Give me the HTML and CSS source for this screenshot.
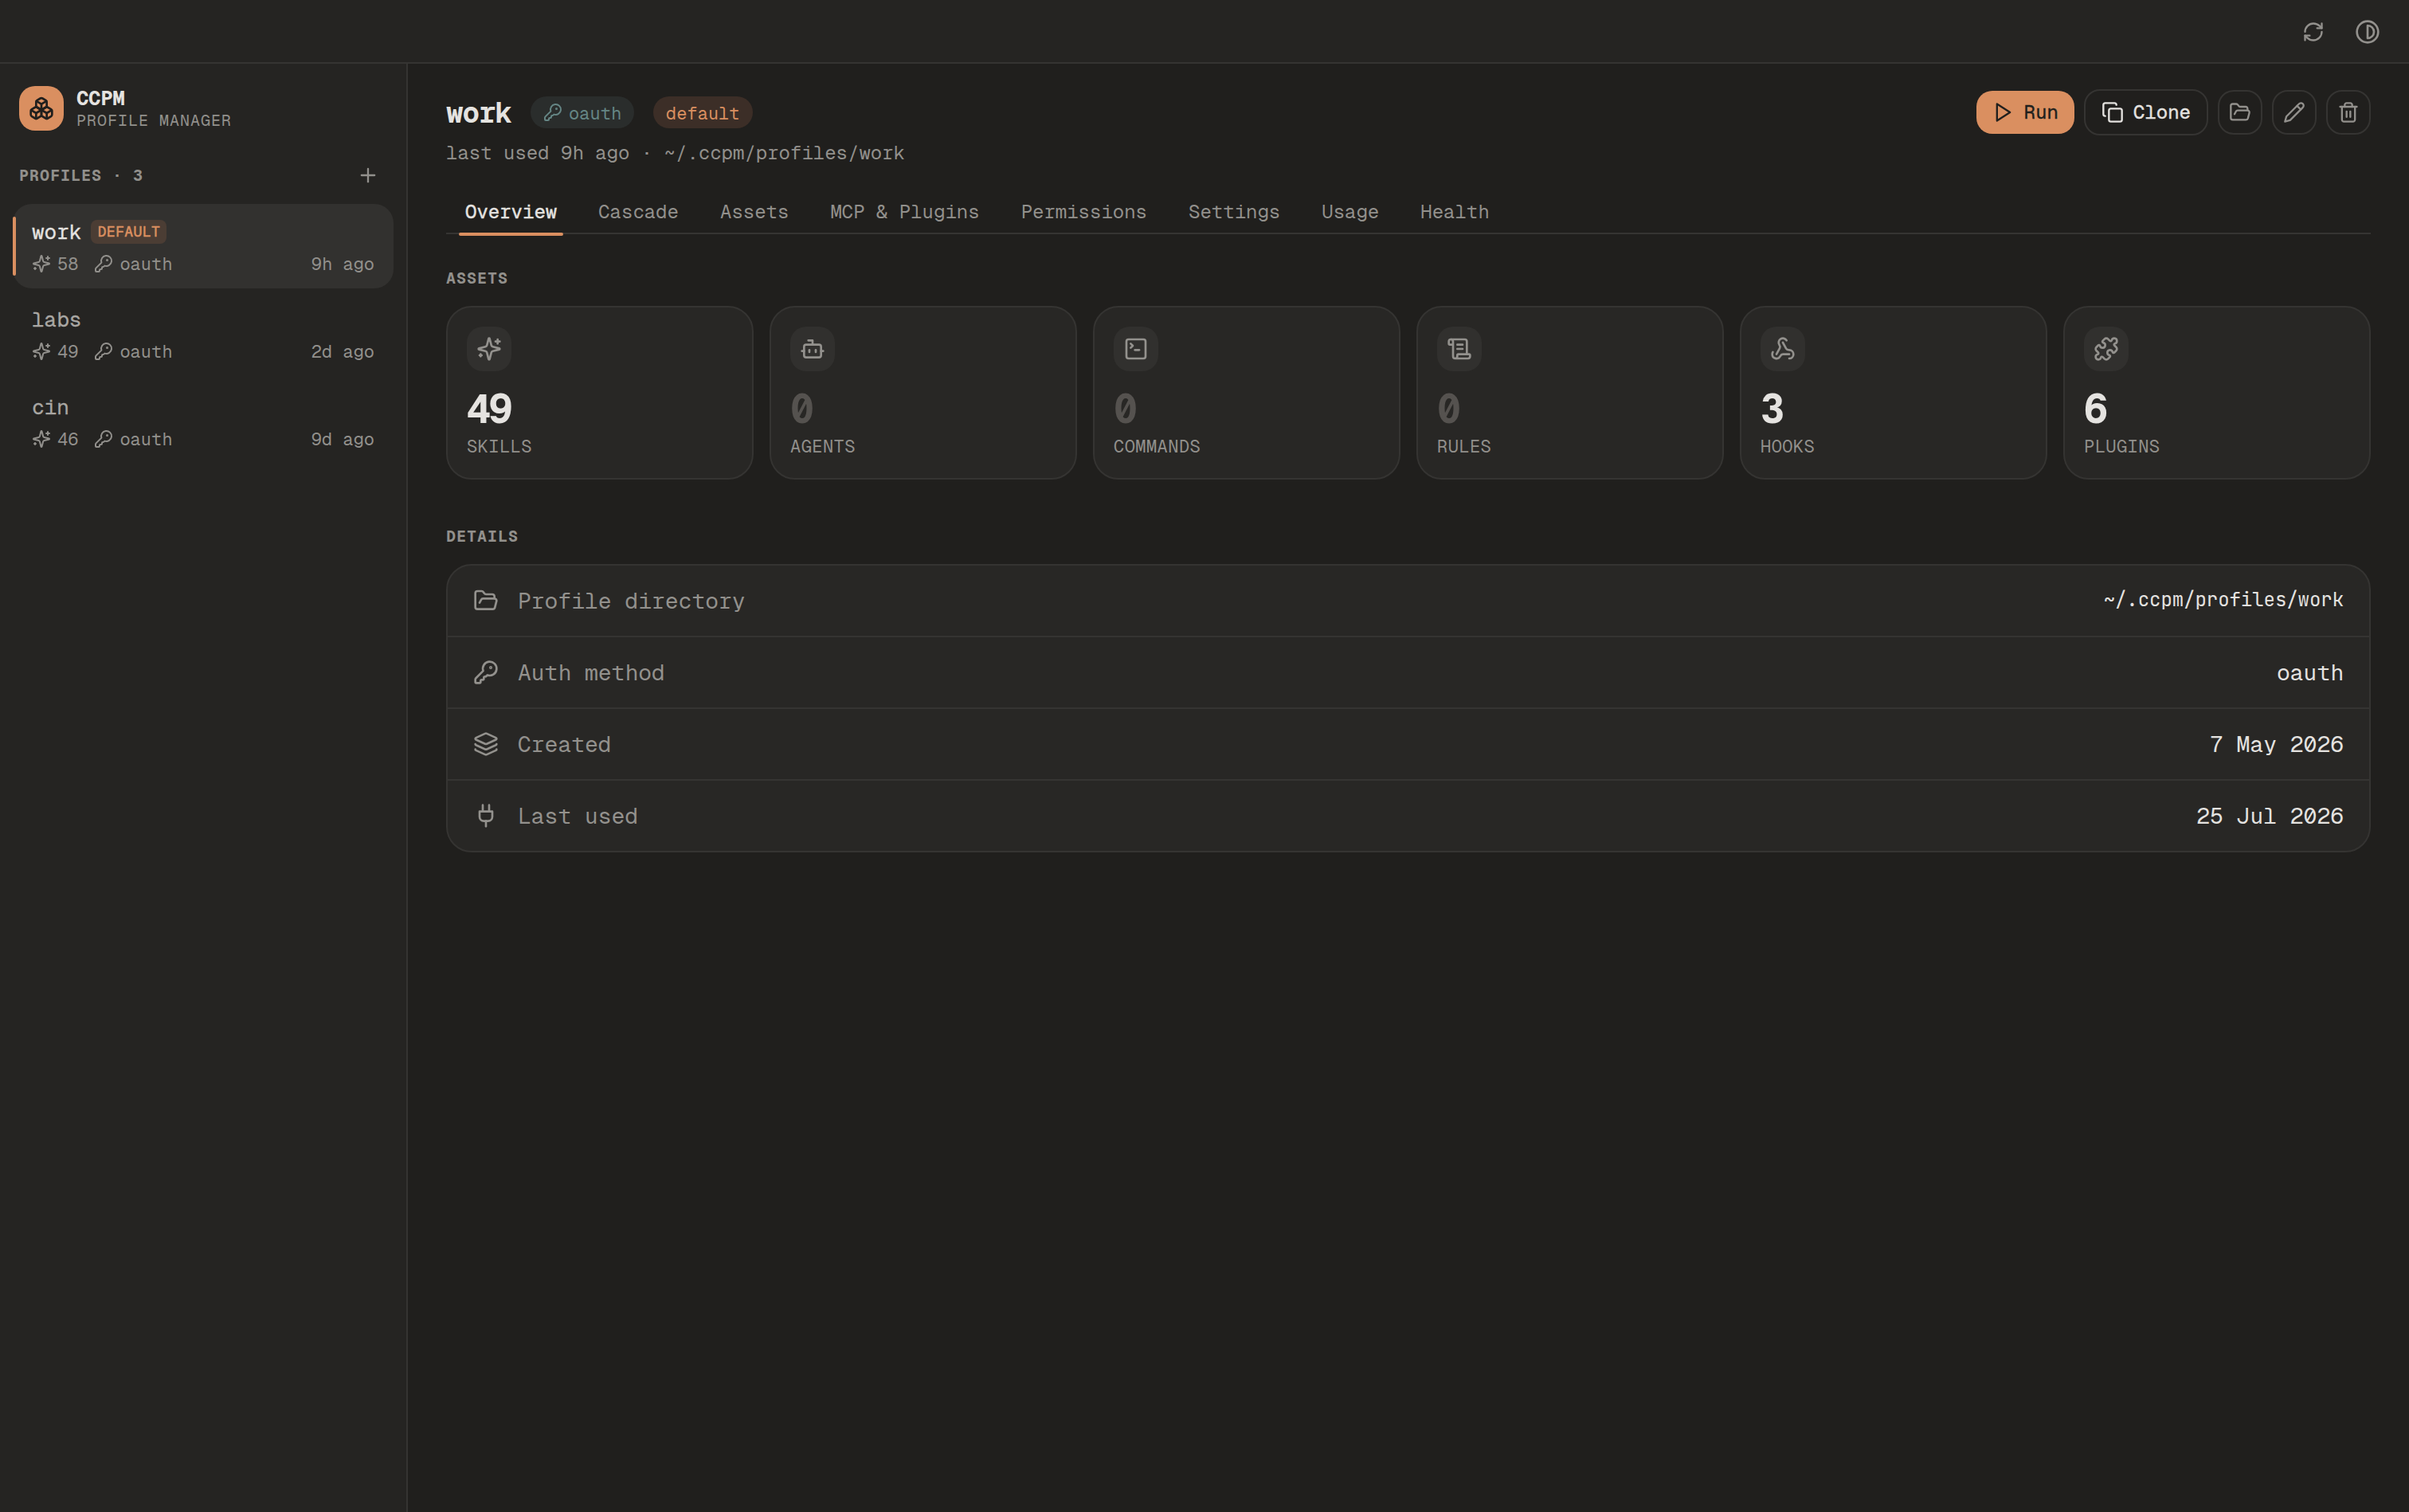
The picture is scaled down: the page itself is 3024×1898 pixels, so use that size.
FILE: index.html
```html
<!DOCTYPE html>
<html lang="en">
<head>
    <meta charset="UTF-8">
    <meta name="viewport" content="width=device-width, initial-scale=1.0">
    <title>CCPM Profile Manager</title>
    <link rel="stylesheet" href="styles.css">
</head>
<body>
    <!-- shared icons -->
    <svg class="sprite" width="0" height="0">
        <symbol id="i-sparkles" viewBox="0 0 24 24">
            <path d="M9.937 15.5A2 2 0 0 0 8.5 14.063l-6.135-1.582a.5.5 0 0 1 0-.962L8.5 9.936A2 2 0 0 0 9.937 8.5l1.582-6.135a.5.5 0 0 1 .963 0L14.063 8.5A2 2 0 0 0 15.5 9.937l6.135 1.581a.5.5 0 0 1 0 .964L15.5 14.063a2 2 0 0 0-1.437 1.437l-1.582 6.135a.5.5 0 0 1-.963 0z"/>
            <path d="M20 3v4"/><path d="M22 5h-4"/><path d="M4 17v2"/><path d="M5 18H3"/>
        </symbol>
        <symbol id="i-key" viewBox="0 0 24 24">
            <path d="M2.586 17.414A2 2 0 0 0 2 18.828V21a1 1 0 0 0 1 1h3a1 1 0 0 0 1-1v-1a1 1 0 0 1 1-1h1a1 1 0 0 0 1-1v-1a1 1 0 0 1 1-1h.172a2 2 0 0 0 1.414-.586l.814-.814a6.5 6.5 0 1 0-4-4z"/>
            <circle cx="16.5" cy="7.5" r=".5" fill="currentColor"/>
        </symbol>
        <symbol id="i-folder" viewBox="0 0 24 24">
            <path d="m6 14 1.5-2.9A2 2 0 0 1 9.24 10H20a2 2 0 0 1 1.94 2.5l-1.54 6a2 2 0 0 1-1.95 1.5H4a2 2 0 0 1-2-2V5a2 2 0 0 1 2-2h3.9a2 2 0 0 1 1.69.9l.81 1.2a2 2 0 0 0 1.67.9H18a2 2 0 0 1 2 2v2"/>
        </symbol>
        <symbol id="i-boxes" viewBox="0 0 24 24">
            <path d="M2.97 12.92A2 2 0 0 0 2 14.63v3.24a2 2 0 0 0 .97 1.71l3 1.8a2 2 0 0 0 2.06 0L12 19v-5.5l-5-3-4.03 2.42Z"/>
            <path d="m7 16.5-4.74-2.85"/><path d="m7 16.5 5-3"/><path d="M7 16.5v5.17"/>
            <path d="M12 13.5V19l3.97 2.38a2 2 0 0 0 2.06 0l3-1.8a2 2 0 0 0 .97-1.71v-3.24a2 2 0 0 0-.97-1.71L17 10.5l-5 3Z"/>
            <path d="m17 16.5-5-3"/><path d="m17 16.5 4.74-2.85"/><path d="M17 16.5v5.17"/>
            <path d="M7.97 4.42A2 2 0 0 0 7 6.13v4.37l5 3 5-3V6.13a2 2 0 0 0-.97-1.71l-3-1.8a2 2 0 0 0-2.06 0l-3 1.8Z"/>
            <path d="M12 8 7.26 5.15"/><path d="m12 8 4.74-2.85"/><path d="M12 13.5V8"/>
        </symbol>
    </svg>

    <header class="topbar">
        <svg class="icon icon-md" viewBox="0 0 24 24"><path d="M3 12a9 9 0 0 1 9-9 9.75 9.75 0 0 1 6.74 2.74L21 8"/><path d="M21 3v5h-5"/><path d="M21 12a9 9 0 0 1-9 9 9.75 9.75 0 0 1-6.74-2.74L3 16"/><path d="M8 16H3v5"/></svg>
        <svg class="icon icon-lg" viewBox="0 0 24 24"><circle cx="12" cy="12" r="10"/><path d="M12 18a6 6 0 0 0 0-12v12z"/></svg>
    </header>

    <div class="layout">
        <aside class="sidebar">
            <div class="brand">
                <div class="logo"><svg class="icon icon-lg"><use href="#i-boxes"/></svg></div>
                <div class="brand-text">
                    <div class="brand-name">CCPM</div>
                    <div class="brand-sub">PROFILE MANAGER</div>
                </div>
            </div>
            <div class="list-head">
                <span>PROFILES · 3</span>
                <svg class="icon icon-md" viewBox="0 0 24 24"><path d="M5 12h14"/><path d="M12 5v14"/></svg>
            </div>
            <nav class="profiles">
                <div class="profile active">
                    <div class="profile-top"><span class="profile-name">work</span><span class="tag">DEFAULT</span></div>
                    <div class="profile-meta">
                        <svg class="icon icon-sm"><use href="#i-sparkles"/></svg><span class="count">58</span>
                        <svg class="icon icon-sm"><use href="#i-key"/></svg><span>oauth</span>
                        <span class="ago">9h ago</span>
                    </div>
                </div>
                <div class="profile">
                    <div class="profile-top"><span class="profile-name">labs</span></div>
                    <div class="profile-meta">
                        <svg class="icon icon-sm"><use href="#i-sparkles"/></svg><span class="count">49</span>
                        <svg class="icon icon-sm"><use href="#i-key"/></svg><span>oauth</span>
                        <span class="ago">2d ago</span>
                    </div>
                </div>
                <div class="profile">
                    <div class="profile-top"><span class="profile-name">cin</span></div>
                    <div class="profile-meta">
                        <svg class="icon icon-sm"><use href="#i-sparkles"/></svg><span class="count">46</span>
                        <svg class="icon icon-sm"><use href="#i-key"/></svg><span>oauth</span>
                        <span class="ago">9d ago</span>
                    </div>
                </div>
            </nav>
        </aside>

        <main class="main">
            <div class="header">
                <h1>work</h1>
                <span class="pill pill-auth"><svg class="icon icon-sm"><use href="#i-key"/></svg><span>oauth</span></span>
                <span class="pill pill-default"><span>default</span></span>
                <div class="actions">
                    <button class="btn btn-run"><svg class="icon icon-md" viewBox="0 0 24 24"><path d="m5 3 14 9-14 9V3z"/></svg><span>Run</span></button>
                    <button class="btn btn-clone"><svg class="icon icon-md" viewBox="0 0 24 24"><rect width="14" height="14" x="8" y="8" rx="2"/><path d="M4 16c-1.1 0-2-.9-2-2V4c0-1.1.9-2 2-2h10c1.1 0 2 .9 2 2"/></svg><span>Clone</span></button>
                    <button class="btn btn-icon"><svg class="icon icon-md"><use href="#i-folder"/></svg></button>
                    <button class="btn btn-icon"><svg class="icon icon-md" viewBox="0 0 24 24"><path d="M17 3a2.85 2.83 0 1 1 4 4L7.5 20.5 2 22l1.5-5.5Z"/><path d="m15 5 4 4"/></svg></button>
                    <button class="btn btn-icon"><svg class="icon icon-md" viewBox="0 0 24 24"><path d="M3 6h18"/><path d="M19 6v14c0 1-1 2-2 2H7c-1 0-2-1-2-2V6"/><path d="M8 6V4c0-1 1-2 2-2h4c1 0 2 1 2 2v2"/><path d="M10 11v6"/><path d="M14 11v6"/></svg></button>
                </div>
            </div>
            <p class="subtitle">last used 9h ago · ~/.ccpm/profiles/work</p>

            <div class="tabs">
                <a class="tab active">Overview</a>
                <a class="tab">Cascade</a>
                <a class="tab">Assets</a>
                <a class="tab">MCP &amp; Plugins</a>
                <a class="tab">Permissions</a>
                <a class="tab">Settings</a>
                <a class="tab">Usage</a>
                <a class="tab">Health</a>
            </div>

            <h2>ASSETS</h2>
            <div class="cards">
                <div class="card">
                    <div class="tile"><svg class="icon icon-lg"><use href="#i-sparkles"/></svg></div>
                    <div class="number">49</div>
                    <div class="label">SKILLS</div>
                </div>
                <div class="card">
                    <div class="tile"><svg class="icon icon-lg" viewBox="0 0 24 24"><path d="M12 8V4H8"/><rect width="16" height="12" x="4" y="8" rx="2"/><path d="M2 14h2"/><path d="M20 14h2"/><path d="M15 13v2"/><path d="M9 13v2"/></svg></div>
                    <div class="number zero">0</div>
                    <div class="label">AGENTS</div>
                </div>
                <div class="card">
                    <div class="tile"><svg class="icon icon-lg" viewBox="0 0 24 24"><path d="m7 11 2-2-2-2"/><path d="M11 13h4"/><rect width="18" height="18" x="3" y="3" rx="2"/></svg></div>
                    <div class="number zero">0</div>
                    <div class="label">COMMANDS</div>
                </div>
                <div class="card">
                    <div class="tile"><svg class="icon icon-lg" viewBox="0 0 24 24"><path d="M15 12h-5"/><path d="M15 8h-5"/><path d="M19 17V5a2 2 0 0 0-2-2H4"/><path d="M8 21h12a2 2 0 0 0 2-2v-1a1 1 0 0 0-1-1H11a1 1 0 0 0-1 1v1a2 2 0 1 1-4 0V5a2 2 0 1 0-4 0v2a1 1 0 0 0 1 1h3"/></svg></div>
                    <div class="number zero">0</div>
                    <div class="label">RULES</div>
                </div>
                <div class="card">
                    <div class="tile"><svg class="icon icon-lg" viewBox="0 0 24 24"><path d="M18 16.98h-5.99c-1.1 0-1.95.94-2.48 1.9A4 4 0 0 1 2 17c.01-.7.2-1.4.57-2"/><path d="m6 17 3.13-5.78c.53-.97.1-2.18-.5-3.1a4 4 0 1 1 6.89-4.06"/><path d="m12 6 3.13 5.73C15.66 12.7 16.9 13 18 13a4 4 0 0 1 0 8"/></svg></div>
                    <div class="number">3</div>
                    <div class="label">HOOKS</div>
                </div>
                <div class="card">
                    <div class="tile"><svg class="icon icon-lg" viewBox="0 0 24 24"><path d="M15.39 4.39a1 1 0 0 0 1.68-.474 2.5 2.5 0 1 1 3.014 3.015 1 1 0 0 0-.474 1.68l1.683 1.682a2.414 2.414 0 0 1 0 3.414L19.61 15.39a1 1 0 0 1-1.68-.474 2.5 2.5 0 1 0-3.014 3.015 1 1 0 0 1 .474 1.68l-1.683 1.682a2.414 2.414 0 0 1-3.414 0L8.61 19.61a1 1 0 0 0-1.68.474 2.5 2.5 0 1 1-3.014-3.015 1 1 0 0 0 .474-1.68l-1.683-1.682a2.414 2.414 0 0 1 0-3.414L4.39 8.61a1 1 0 0 1 1.68.474 2.5 2.5 0 1 0 3.014-3.015 1 1 0 0 1-.474-1.68l1.683-1.682a2.414 2.414 0 0 1 3.414 0z"/></svg></div>
                    <div class="number">6</div>
                    <div class="label">PLUGINS</div>
                </div>
            </div>

            <h2>DETAILS</h2>
            <div class="details">
                <div class="row">
                    <svg class="icon icon-lg"><use href="#i-folder"/></svg>
                    <span>Profile directory</span>
                    <span class="value path">~/.ccpm/profiles/work</span>
                </div>
                <div class="row">
                    <svg class="icon icon-lg"><use href="#i-key"/></svg>
                    <span>Auth method</span>
                    <span class="value">oauth</span>
                </div>
                <div class="row">
                    <svg class="icon icon-lg" viewBox="0 0 24 24"><path d="M12.83 2.18a2 2 0 0 0-1.66 0L2.6 6.08a1 1 0 0 0 0 1.83l8.58 3.91a2 2 0 0 0 1.66 0l8.58-3.9a1 1 0 0 0 0-1.83z"/><path d="M2 12a1 1 0 0 0 .58.91l8.6 3.91a2 2 0 0 0 1.65 0l8.58-3.9A1 1 0 0 0 22 12"/><path d="M2 17a1 1 0 0 0 .58.91l8.6 3.91a2 2 0 0 0 1.65 0l8.58-3.9A1 1 0 0 0 22 17"/></svg>
                    <span>Created</span>
                    <span class="value">7 May 2026</span>
                </div>
                <div class="row">
                    <svg class="icon icon-lg" viewBox="0 0 24 24"><path d="M12 22v-5"/><path d="M9 8V2"/><path d="M15 8V2"/><path d="M18 8v5a4 4 0 0 1-4 4h-4a4 4 0 0 1-4-4V8Z"/></svg>
                    <span>Last used</span>
                    <span class="value">25 Jul 2026</span>
                </div>
            </div>
        </main>
    </div>
</body>
</html>
```
FILE: styles.css
```css
* {
    box-sizing: border-box;
}
body {
    margin: 0;
    height: 100vh;
    display: flex;
    flex-direction: column;
    overflow: hidden;
    background-color: #201f1d;
    color: #e5e3e0;
    font-family: 'Geist Mono', 'Liberation Mono', monospace;
    font-size: 24px;
}
.sprite {
    position: absolute;
}
.icon {
    flex: none;
    fill: none;
    stroke: currentColor;
    stroke-width: 2;
    stroke-linecap: round;
    stroke-linejoin: round;
}
.icon-sm {
    width: 24px;
    height: 24px;
}
.icon-md {
    width: 28px;
    height: 28px;
}
.icon-lg {
    width: 32px;
    height: 32px;
}

/* Top bar */
.topbar {
    flex: none;
    height: 80px;
    display: flex;
    align-items: center;
    justify-content: flex-end;
    gap: 38px;
    padding: 2px 36px 0 0;
    background-color: #252422;
    border-bottom: 2px solid #353432;
    color: #93918d;
}
.layout {
    flex: 1;
    display: flex;
}

/* Sidebar */
.sidebar {
    flex: none;
    width: 512px;
    padding-top: 28px;
    background-color: #252422;
    border-right: 2px solid #353432;
}
.brand {
    display: flex;
    gap: 16px;
    height: 56px;
    padding: 0 24px;
}
.brand-text {
    margin-top: -2px;
}
.logo {
    width: 56px;
    height: 56px;
    display: flex;
    align-items: center;
    justify-content: center;
    border-radius: 20px;
    background-color: #da8f60;
    color: #201f1d;
}
.brand-name {
    font-size: 26px;
    line-height: 34px;
    font-weight: 700;
    letter-spacing: -0.02em;
}
.brand-sub {
    font-size: 20px;
    line-height: 22px;
    letter-spacing: 1px;
    color: #92908c;
}
.list-head {
    display: flex;
    align-items: center;
    justify-content: space-between;
    height: 56px;
    margin: 28px 0 8px;
    padding: 0 34px 0 24px;
    font-size: 20px;
    font-weight: 700;
    letter-spacing: 1px;
    color: #92908c;
}
.profiles {
    display: flex;
    flex-direction: column;
    gap: 4px;
    padding: 0 16px;
}
.profile {
    position: relative;
    height: 106px;
    padding: 20px 24px 0;
    border-radius: 24px;
    color: #a9a7a3;
}
.profile.active {
    background-color: #32312f;
    color: #e5e3e0;
}
.profile.active::before {
    content: '';
    position: absolute;
    left: 0;
    top: 16px;
    width: 4px;
    height: 74px;
    border-radius: 2px;
    background-color: #da8f60;
}
.profile-top {
    display: flex;
    align-items: center;
    gap: 12px;
    height: 30px;
}
.profile-name {
    font-size: 26px;
    -webkit-text-stroke: 0.3px currentColor;
}
.tag {
    height: 30px;
    padding: 0 8px;
    border-radius: 8px;
    background-color: #4b3d34;
    color: #da8f60;
    font-size: 18px;
    line-height: 29px;
    letter-spacing: 0.45px;
    -webkit-text-stroke: 0.6px currentColor;
}
.profile-meta {
    display: flex;
    align-items: center;
    gap: 8px;
    height: 28px;
    margin-top: 11px;
    font-size: 22px;
    color: #92908c;
}
.count {
    margin-right: 12px;
}
.ago {
    margin-left: auto;
}

/* Main */
.main {
    flex: 1;
    padding: 32px 48px 0;
}
.header {
    display: flex;
    align-items: center;
    gap: 24px;
    height: 58px;
}
h1 {
    margin: 0;
    padding-top: 1px;
    font-size: 36px;
    font-weight: 700;
    letter-spacing: -0.03em;
}
.pill {
    display: flex;
    align-items: center;
    gap: 8px;
    height: 40px;
    padding: 0 16px;
    border-radius: 20px;
    font-size: 22px;
}
.pill span {
    padding-top: 1px;
}
.pill-auth {
    background-color: #2a2d2c;
    color: #658685;
}
.pill-default {
    background-color: #3c2e27;
    color: #da8f60;
}
.actions {
    display: flex;
    align-items: center;
    gap: 12px;
    margin-left: auto;
}
.btn {
    display: flex;
    align-items: center;
    justify-content: center;
    gap: 12px;
    padding: 0 20px;
    border: none;
    border-radius: 20px;
    background: none;
    color: #e5e3e0;
    font-family: inherit;
    font-size: 24px;
    -webkit-text-stroke: 0.4px currentColor;
}
.btn span {
    padding-bottom: 2px;
}
.btn-run {
    height: 54px;
    background-color: #da8f60;
    color: #201f1d;
}
.btn-clone {
    height: 58px;
    border: 2px solid #353432;
}
.btn-icon {
    width: 56px;
    height: 56px;
    padding: 0;
    border: 2px solid #353432;
    color: #93918d;
}
.subtitle {
    margin: 6px 0 0;
    line-height: 32px;
    color: #92908c;
}
.tabs {
    display: flex;
    gap: 4px;
    height: 50px;
    margin-top: 36px;
    border-bottom: 2px solid #353432;
}
.tab {
    position: relative;
    height: 48px;
    padding: 0 24px;
    line-height: 44px;
    color: #92908c;
}
.tab.active {
    color: #e5e3e0;
    -webkit-text-stroke: 0.4px currentColor;
}
.tab.active::after {
    content: '';
    position: absolute;
    left: 16px;
    right: 16px;
    bottom: -4px;
    height: 4px;
    border-radius: 2px;
    background-color: #da8f60;
}
h2 {
    margin: 42px 0 22px;
    font-size: 20px;
    line-height: 26px;
    font-weight: 700;
    letter-spacing: 1px;
    color: #92908c;
}
.cards {
    display: grid;
    grid-template-columns: repeat(6, 1fr);
    gap: 20px;
    margin-bottom: 58px;
}
.card {
    padding: 24px 24px 26px;
    border: 2px solid #353432;
    border-radius: 32px;
    background-color: #282725;
}
.tile {
    width: 56px;
    height: 56px;
    display: flex;
    align-items: center;
    justify-content: center;
    border-radius: 20px;
    background-color: #31302e;
    color: #93918d;
}
.number {
    margin-top: 24px;
    font-size: 50px;
    line-height: 48px;
    font-weight: 700;
    letter-spacing: -2.4px;
}
.zero {
    color: #55524f;
}
.label {
    margin-top: 8px;
    font-size: 22px;
    line-height: 28px;
    letter-spacing: 0.02em;
    color: #92908c;
}
.details {
    border: 2px solid #353432;
    border-radius: 32px;
    background-color: #282725;
}
.row {
    display: flex;
    align-items: center;
    gap: 24px;
    height: 90px;
    padding: 0 32px;
    border-bottom: 2px solid #353432;
    font-size: 28px;
    color: #93918d;
}
.row:last-child {
    height: 88px;
    border-bottom: none;
}
.row .value {
    margin-left: auto;
    color: #e5e3e0;
}
.row .path {
    padding-bottom: 3px;
    font-family: 'JetBrains Mono', 'DejaVu Sans Mono', monospace;
    font-size: 24px;
    letter-spacing: -0.05px;
}
```
